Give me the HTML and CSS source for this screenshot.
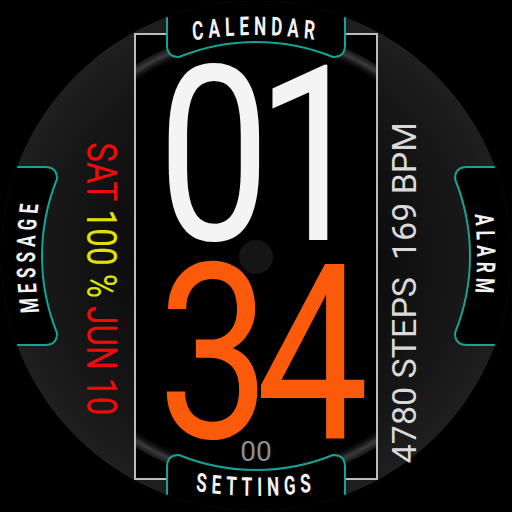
FILE: index.html
```html
<!DOCTYPE html>
<html lang="en">
<head>
<meta charset="utf-8">
<title>Watch face</title>
<link rel="stylesheet" href="styles.css">
</head>
<body>
<div class="watch">
  <svg class="dial" viewBox="0 0 512 512" width="512" height="512" aria-hidden="true">
    <defs>
      <radialGradient id="disc" cx="256" cy="256" r="256" gradientUnits="userSpaceOnUse">
        <stop offset="0" stop-color="#000"/>
        <stop offset="0.5" stop-color="#0e0e0e"/>
        <stop offset="0.8" stop-color="#171717"/>
        <stop offset="1" stop-color="#1f1f1f"/>
      </radialGradient>
      <radialGradient id="ringGrad" cx="256" cy="256" r="228" gradientUnits="userSpaceOnUse">
        <stop offset="0.92" stop-color="#000" stop-opacity="0"/>
        <stop offset="0.965" stop-color="#3c3c3c"/>
        <stop offset="1" stop-color="#080808"/>
      </radialGradient>
      <clipPath id="discClip"><circle cx="256" cy="256" r="255"/></clipPath>
      <clipPath id="frameClip"><rect x="136" y="35" width="240" height="443"/></clipPath>
      <path id="arcTop" d="M-16.7 83.2 A545.5 360 0 0 1 528.7 83.2"/>
      <path id="arcBottom" d="M-16.7 447.8 A545.5 360 0 0 0 528.7 447.8"/>
    </defs>

    <circle cx="256" cy="256" r="255" fill="url(#disc)"/>
    <rect class="frame" x="135" y="34" width="242" height="445"/>
    <circle cx="256" cy="256" r="219" fill="none" stroke="url(#ringGrad)" stroke-width="14" clip-path="url(#frameClip)"/>
    <circle cx="256" cy="257" r="17" fill="#151515"/>

    <g clip-path="url(#discClip)">
      <g class="tab">
        <path class="tab-fill" d="M167 -4 L167 45 Q167 57 179 57 A205 205 0 0 1 333 57 Q345 57 345 45 L345 -4 Z"/>
        <path class="tab-edge" d="M167 -4 L167 45 Q167 57 179 57 A205 205 0 0 1 333 57 Q345 57 345 45 L345 -4"/>
        <g transform="translate(256 0) scale(0.66 1) translate(-256 0)">
          <text class="tab-label"><textPath href="#arcTop" startOffset="50%" text-anchor="middle">CALENDAR</textPath></text>
        </g>
      </g>
      <g class="tab" transform="rotate(-90 256 256)">
        <path class="tab-fill" d="M167 -4 L167 45 Q167 57 179 57 A205 205 0 0 1 333 57 Q345 57 345 45 L345 -4 Z"/>
        <path class="tab-edge" d="M167 -4 L167 45 Q167 57 179 57 A205 205 0 0 1 333 57 Q345 57 345 45 L345 -4"/>
        <g transform="translate(256 0) scale(0.66 1) translate(-256 0)">
          <text class="tab-label"><textPath href="#arcTop" startOffset="50%" text-anchor="middle">MESSAGE</textPath></text>
        </g>
      </g>
      <g class="tab" transform="rotate(90 256 256)">
        <path class="tab-fill" d="M167 -4 L167 45 Q167 57 179 57 A205 205 0 0 1 333 57 Q345 57 345 45 L345 -4 Z"/>
        <path class="tab-edge" d="M167 -4 L167 45 Q167 57 179 57 A205 205 0 0 1 333 57 Q345 57 345 45 L345 -4"/>
        <g transform="translate(256 0) scale(0.66 1) translate(-256 0)">
          <text class="tab-label"><textPath href="#arcTop" startOffset="50%" text-anchor="middle">ALARM</textPath></text>
        </g>
      </g>
      <g class="tab" transform="rotate(180 256 256)">
        <path class="tab-fill" d="M167 -4 L167 45 Q167 57 179 57 A205 205 0 0 1 333 57 Q345 57 345 45 L345 -4 Z"/>
        <path class="tab-edge" d="M167 -4 L167 45 Q167 57 179 57 A205 205 0 0 1 333 57 Q345 57 345 45 L345 -4"/>
      </g>
      <g transform="translate(256 0) scale(0.66 1) translate(-256 0)">
        <text class="tab-label"><textPath href="#arcBottom" startOffset="50%" text-anchor="middle">SETTINGS</textPath></text>
      </g>
    </g>
  </svg>

  <div class="face">
    <div class="side side-left">
      <div class="vtext left-text"><span class="red">SAT</span> <span class="yellow">100 %</span> <span class="red">JUN 10</span></div>
    </div>
    <div class="center">
      <div class="digits hours">01</div>
      <div class="digits minutes">34</div>
      <div class="seconds">00</div>
    </div>
    <div class="side side-right">
      <div class="vtext right-text">4780 STEPS  169 BPM</div>
    </div>
  </div>
</div>
</body>
</html>
```

FILE: styles.css
```css
* { box-sizing: border-box; }

html, body {
  margin: 0;
  padding: 0;
  background: #000;
}

body {
  width: 512px;
  height: 512px;
  overflow: hidden;
  font-family: Roboto, "Liberation Sans", sans-serif;
}

.watch {
  position: relative;
  width: 512px;
  height: 512px;
}

.dial {
  position: absolute;
  inset: 0;
  display: block;
}

.frame {
  fill: #000;
  stroke: #bdbdbd;
  stroke-width: 2;
}

.tab-fill { fill: #000; }

.tab-edge {
  fill: none;
  stroke: #17a393;
  stroke-width: 2;
}

.tab-label {
  font-family: Roboto, "Liberation Sans", sans-serif;
  font-weight: 700;
  font-size: 26px;
  letter-spacing: 7.5px;
  fill: #f2f2f2;
}

.face {
  position: relative;
  display: grid;
  grid-template-columns: 134px 244px 134px;
  height: 512px;
}

.side {
  display: flex;
  align-items: center;
}

.side-left {
  justify-content: flex-end;
  padding-right: 12px;
  padding-top: 46px;
}

.side-right {
  justify-content: flex-start;
  padding-left: 9px;
  padding-top: 73px;
}

.vtext {
  writing-mode: vertical-rl;
  white-space: pre;
}

.left-text {
  font-size: 42px;
  line-height: 42px;
  transform: scaleY(0.79);
}

.right-text {
  font-size: 34px;
  line-height: 34px;
  color: #d9d9d9;
  transform: rotate(180deg);
}

.red { color: #f00a0a; }
.yellow { color: #e2e200; }

.center {
  display: flex;
  flex-direction: column;
  align-items: center;
  padding-top: 69px;
}

.digits {
  font-size: 245px;
  letter-spacing: -18px;
  transform: scaleX(0.82);
}

.hours {
  line-height: 176px;
  color: #f4f4f4;
}

.minutes {
  margin-top: 24px;
  line-height: 172px;
  color: #fa5a0a;
}

.seconds {
  margin-top: 1px;
  font-size: 28px;
  line-height: 20px;
  color: #8e8e8e;
}
```
